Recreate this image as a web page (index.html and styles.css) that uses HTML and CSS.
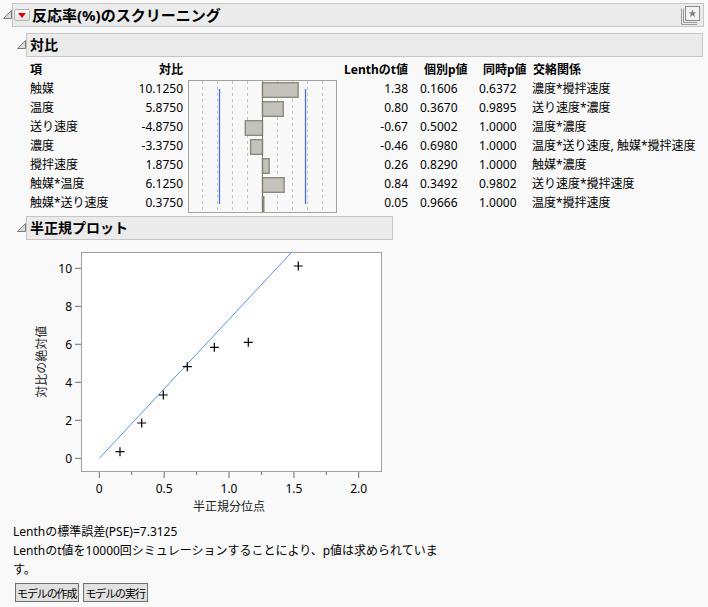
FILE: index.html
```html
<!DOCTYPE html>
<html lang="ja">
<head>
<meta charset="utf-8">
<title>反応率(%)のスクリーニング</title>
<link rel="stylesheet" href="styles.css">
</head>
<body>
<div class="outline outer">
  <div class="head">
    <span class="tri"><svg width="9" height="9" viewBox="0 0 9 9"><polygon points="0.5,8.5 8.5,0.5 8.5,8.5" fill="#dcdcdc" stroke="#7c7c7c" stroke-width="1"/></svg></span>
    <div class="hbox">
      <span class="redbtn"><svg width="8" height="5" viewBox="0 0 8 5"><polygon points="0,0 8,0 4,5" fill="#e00000"/></svg></span>
      <span class="title main-title">反応率(%)のスクリーニング</span>
      <span class="star"><svg width="21" height="20" viewBox="0 0 21 20">
        <path d="M1.5 3.5 V19.5 H17" fill="none" stroke="#9a9a9a" stroke-width="1"/>
        <path d="M3.5 3.5 V17.5 H17" fill="none" stroke="#9a9a9a" stroke-width="1"/>
        <rect x="5.5" y="1.5" width="14" height="14" fill="#f2f2f2" stroke="#8c8c8c" stroke-width="1"/>
        <polygon points="12.5,4.6 13.5,7.3 16.3,7.4 14.1,9.1 14.9,11.9 12.5,10.3 10.1,11.9 10.9,9.1 8.7,7.4 11.5,7.3" fill="#808080"/>
      </svg></span>
    </div>
  </div>
  <div class="body">
    <div class="outline inner">
      <div class="head">
        <span class="tri"><svg width="9" height="9" viewBox="0 0 9 9"><polygon points="0.5,8.5 8.5,0.5 8.5,8.5" fill="#dcdcdc" stroke="#7c7c7c" stroke-width="1"/></svg></span>
        <div class="hbox"><span class="title">対比</span></div>
      </div>
      <div class="body">
        <div class="ctable">
          <div class="th term">項</div>
          <div class="th num">対比</div>
          <div class="th blank"></div>
          <div class="th num">Lenthのt値</div>
          <div class="th p1h">個別p値</div>
          <div class="th p2h">同時p値</div>
          <div class="th alh">交絡関係</div>

          <div class="chart">
            <svg width="149" height="133" viewBox="0 0 149 133">
              <rect x="0.5" y="0.5" width="148" height="132" fill="#f8f8f8" stroke="#a3a399" stroke-width="1"/>
              <g stroke="#c6c6c6" stroke-width="1" stroke-dasharray="3 3">
                <line x1="14.5" y1="1" x2="14.5" y2="132"/>
                <line x1="29.5" y1="1" x2="29.5" y2="132"/>
                <line x1="44.5" y1="1" x2="44.5" y2="132"/>
                <line x1="59.5" y1="1" x2="59.5" y2="132"/>
                <line x1="89.5" y1="1" x2="89.5" y2="132"/>
                <line x1="104.5" y1="1" x2="104.5" y2="132"/>
                <line x1="119.5" y1="1" x2="119.5" y2="132"/>
                <line x1="134.5" y1="1" x2="134.5" y2="132"/>
              </g>
              <g fill="#c3c3bb" stroke="#8a8a7a" stroke-width="1.4">
                <rect x="74.5" y="2.7" width="35.6" height="14.6"/>
                <rect x="74.5" y="21.7" width="20.7" height="14.6"/>
                <rect x="57.3" y="40.7" width="17.2" height="14.6"/>
                <rect x="62.6" y="59.7" width="11.9" height="14.6"/>
                <rect x="74.5" y="78.7" width="6.6" height="14.6"/>
                <rect x="74.5" y="97.7" width="21.6" height="14.6"/>
                <rect x="74.5" y="116.7" width="1.3" height="14.6"/>
              </g>
              <line x1="74.5" y1="1" x2="74.5" y2="132" stroke="#7a7a6c" stroke-width="1"/>
              <g stroke="#3f6ae6" stroke-width="1.2">
                <line x1="31.5" y1="9" x2="31.5" y2="124"/>
                <line x1="117.5" y1="9" x2="117.5" y2="124"/>
              </g>
            </svg>
          </div>

          <div class="td term">触媒</div><div class="td num">10.1250</div><div class="td num c4">1.38</div><div class="td p1">0.1606</div><div class="td p2">0.6372</div><div class="td al">濃度*攪拌速度</div>
          <div class="td term">温度</div><div class="td num">5.8750</div><div class="td num c4">0.80</div><div class="td p1">0.3670</div><div class="td p2">0.9895</div><div class="td al">送り速度*濃度</div>
          <div class="td term">送り速度</div><div class="td num">-4.8750</div><div class="td num c4">-0.67</div><div class="td p1">0.5002</div><div class="td p2">1.0000</div><div class="td al">温度*濃度</div>
          <div class="td term">濃度</div><div class="td num">-3.3750</div><div class="td num c4">-0.46</div><div class="td p1">0.6980</div><div class="td p2">1.0000</div><div class="td al">温度*送り速度, 触媒*攪拌速度</div>
          <div class="td term">攪拌速度</div><div class="td num">1.8750</div><div class="td num c4">0.26</div><div class="td p1">0.8290</div><div class="td p2">1.0000</div><div class="td al">触媒*濃度</div>
          <div class="td term">触媒*温度</div><div class="td num">6.1250</div><div class="td num c4">0.84</div><div class="td p1">0.3492</div><div class="td p2">0.9802</div><div class="td al">送り速度*攪拌速度</div>
          <div class="td term">触媒*送り速度</div><div class="td num">0.3750</div><div class="td num c4">0.05</div><div class="td p1">0.9666</div><div class="td p2">1.0000</div><div class="td al">温度*攪拌速度</div>
        </div>
      </div>
    </div>

    <div class="outline inner fit">
      <div class="head">
        <span class="tri"><svg width="9" height="9" viewBox="0 0 9 9"><polygon points="0.5,8.5 8.5,0.5 8.5,8.5" fill="#dcdcdc" stroke="#7c7c7c" stroke-width="1"/></svg></span>
        <div class="hbox"><span class="title">半正規プロット</span></div>
      </div>
      <div class="body plotbody">
        <svg class="plot" width="367" height="282" viewBox="0 0 367 282">
          <rect x="55.5" y="12.5" width="300" height="219" fill="#ffffff" stroke="#a0a0a0" stroke-width="1"/>
          <g stroke="#707070" stroke-width="1">
            <line x1="49" y1="218.3" x2="55" y2="218.3"/>
            <line x1="49" y1="180.3" x2="55" y2="180.3"/>
            <line x1="49" y1="142.3" x2="55" y2="142.3"/>
            <line x1="49" y1="104.3" x2="55" y2="104.3"/>
            <line x1="49" y1="66.3" x2="55" y2="66.3"/>
            <line x1="49" y1="28.3" x2="55" y2="28.3"/>
            <line x1="73.3" y1="232" x2="73.3" y2="238"/>
            <line x1="138.2" y1="232" x2="138.2" y2="238"/>
            <line x1="203" y1="232" x2="203" y2="238"/>
            <line x1="267.9" y1="232" x2="267.9" y2="238"/>
            <line x1="332.7" y1="232" x2="332.7" y2="238"/>
            <line x1="105.7" y1="232" x2="105.7" y2="235"/>
            <line x1="170.6" y1="232" x2="170.6" y2="235"/>
            <line x1="235.5" y1="232" x2="235.5" y2="235"/>
            <line x1="300.3" y1="232" x2="300.3" y2="235"/>
          </g>
          <g class="tick" text-anchor="end">
            <text x="46" y="222.5">0</text>
            <text x="46" y="184.5">2</text>
            <text x="46" y="146.5">4</text>
            <text x="46" y="108.5">6</text>
            <text x="46" y="70.5">8</text>
            <text x="46" y="32.5">10</text>
          </g>
          <g class="tick" text-anchor="middle">
            <text x="73.3" y="252.5">0</text>
            <text x="138.2" y="252.5">0.5</text>
            <text x="203" y="252.5">1.0</text>
            <text x="267.9" y="252.5">1.5</text>
            <text x="332.7" y="252.5">2.0</text>
          </g>
          <text class="axt" x="203" y="271" text-anchor="middle">半正規分位点</text>
          <text class="axt" transform="translate(19.7,121.7) rotate(-90)" text-anchor="middle">対比の絶対値</text>
          <line x1="73.3" y1="218.3" x2="265.4" y2="12.5" stroke="#5d8eec" stroke-width="1"/>
          <g stroke="#000000" stroke-width="1.2">
            <path d="M89.5 211.7 H98.5 M94 207.2 V216.2"/>
            <path d="M111.2 183 H120.2 M115.7 178.5 V187.5"/>
            <path d="M132.8 155 H141.8 M137.3 150.5 V159.5"/>
            <path d="M156.8 126.7 H165.8 M161.3 122.2 V131.2"/>
            <path d="M183.8 107.3 H192.8 M188.3 102.8 V111.8"/>
            <path d="M217.8 102.3 H226.8 M222.3 97.8 V106.8"/>
            <path d="M267.8 26 H276.8 M272.3 21.5 V30.5"/>
          </g>
        </svg>
      </div>
    </div>

    <div class="notes">
      <div>Lenthの標準誤差(PSE)=7.3125</div>
      <div>Lenthのt値を10000回シミュレーションすることにより、p値は求められていま<br>す。</div>
    </div>
    <div class="buttons">
      <button class="btn" type="button">モデルの作成</button>
      <button class="btn" type="button">モデルの実行</button>
    </div>
  </div>
</div>
</body>
</html>
```

FILE: styles.css
```css
html, body {
  margin: 0;
  padding: 0;
  background: #f9f9f9;
}
body {
  font-family: "Noto Sans", "Noto Sans CJK JP", sans-serif;
  font-size: 12px;
  color: #000;
}
.outer {
  padding: 3px 4px 0 3px;
}
.head {
  display: flex;
  align-items: flex-start;
}
.tri {
  width: 9px;
  flex: 0 0 9px;
  height: 9px;
  margin-top: 7px;
  display: block;
  line-height: 0;
}
.tri svg { display: block; }
.hbox {
  flex: 1;
  height: 24px;
  box-sizing: border-box;
  background: #ebebeb;
  border: 1px solid #c6c6c6;
  display: flex;
  align-items: center;
  padding-left: 2px;
}
.title {
  font-weight: bold;
  font-size: 14px;
  line-height: 20px;
  white-space: nowrap;
  padding-left: 1px;
}
.main-title {
  font-size: 15px;
  padding-left: 2px;
}
.redbtn {
  width: 16px;
  height: 12px;
  box-sizing: border-box;
  border: 1px solid #b4b4b4;
  border-radius: 2px;
  background: linear-gradient(#fdfdfd, #e4e4e4);
  display: flex;
  align-items: center;
  justify-content: center;
  margin-left: -1px;
}
.redbtn svg { display: block; }
.star {
  margin-left: auto;
  margin-right: 2px;
  line-height: 0;
}
.star svg { display: block; }
.body {
  margin-left: 9px;
}
.inner {
  margin-left: 5px;
  margin-top: 6px;
  margin-right: 1px;
}
.inner + .inner {
  margin-top: 4px;
}
.fit {
  width: fit-content;
}
.ctable {
  display: grid;
  grid-template-columns: 90px 63px 154px 71px 62px 58px auto;
  grid-template-rows: 19px repeat(7, 19px);
  margin-top: 3px;
  padding-left: 4px;
  line-height: 19px;
  white-space: nowrap;
}
.th { font-weight: bold; }
.num { text-align: right; }
.p1h { padding-left: 16px; }
.p2h { padding-left: 13px; }
.alh { padding-left: 5px; }
.p1 { padding-left: 12px; }
.p2 { padding-left: 9px; }
.al { padding-left: 4px; }
.td.term { grid-column: 1; }
.td.c4 { grid-column: 4; }
.chart {
  grid-column: 3;
  grid-row: 2 / span 7;
  margin-left: 5px;
  margin-top: 1px;
  line-height: 0;
}
.chart svg { display: block; }
.plotbody { line-height: 0; }
.plot { display: block; }
.plot text {
  font-family: "Noto Sans", "Noto Sans CJK JP", sans-serif;
  font-size: 12px;
  fill: #000;
}
.plot .axt { fill: #222; }
.notes {
  margin-left: 1px;
  line-height: 19px;
}
.buttons {
  display: flex;
  gap: 4px;
  margin-left: 3px;
  margin-top: 4px;
}
.btn {
  height: 19px;
  box-sizing: border-box;
  border: 1px solid #707070;
  background: #e1e1e1;
  font-family: "Noto Sans CJK JP", sans-serif;
  font-size: 11px;
  letter-spacing: -1.1px;
  padding: 0 2px 0 1px;
  line-height: 16px;
  color: #000;
  border-radius: 0;
}
```
